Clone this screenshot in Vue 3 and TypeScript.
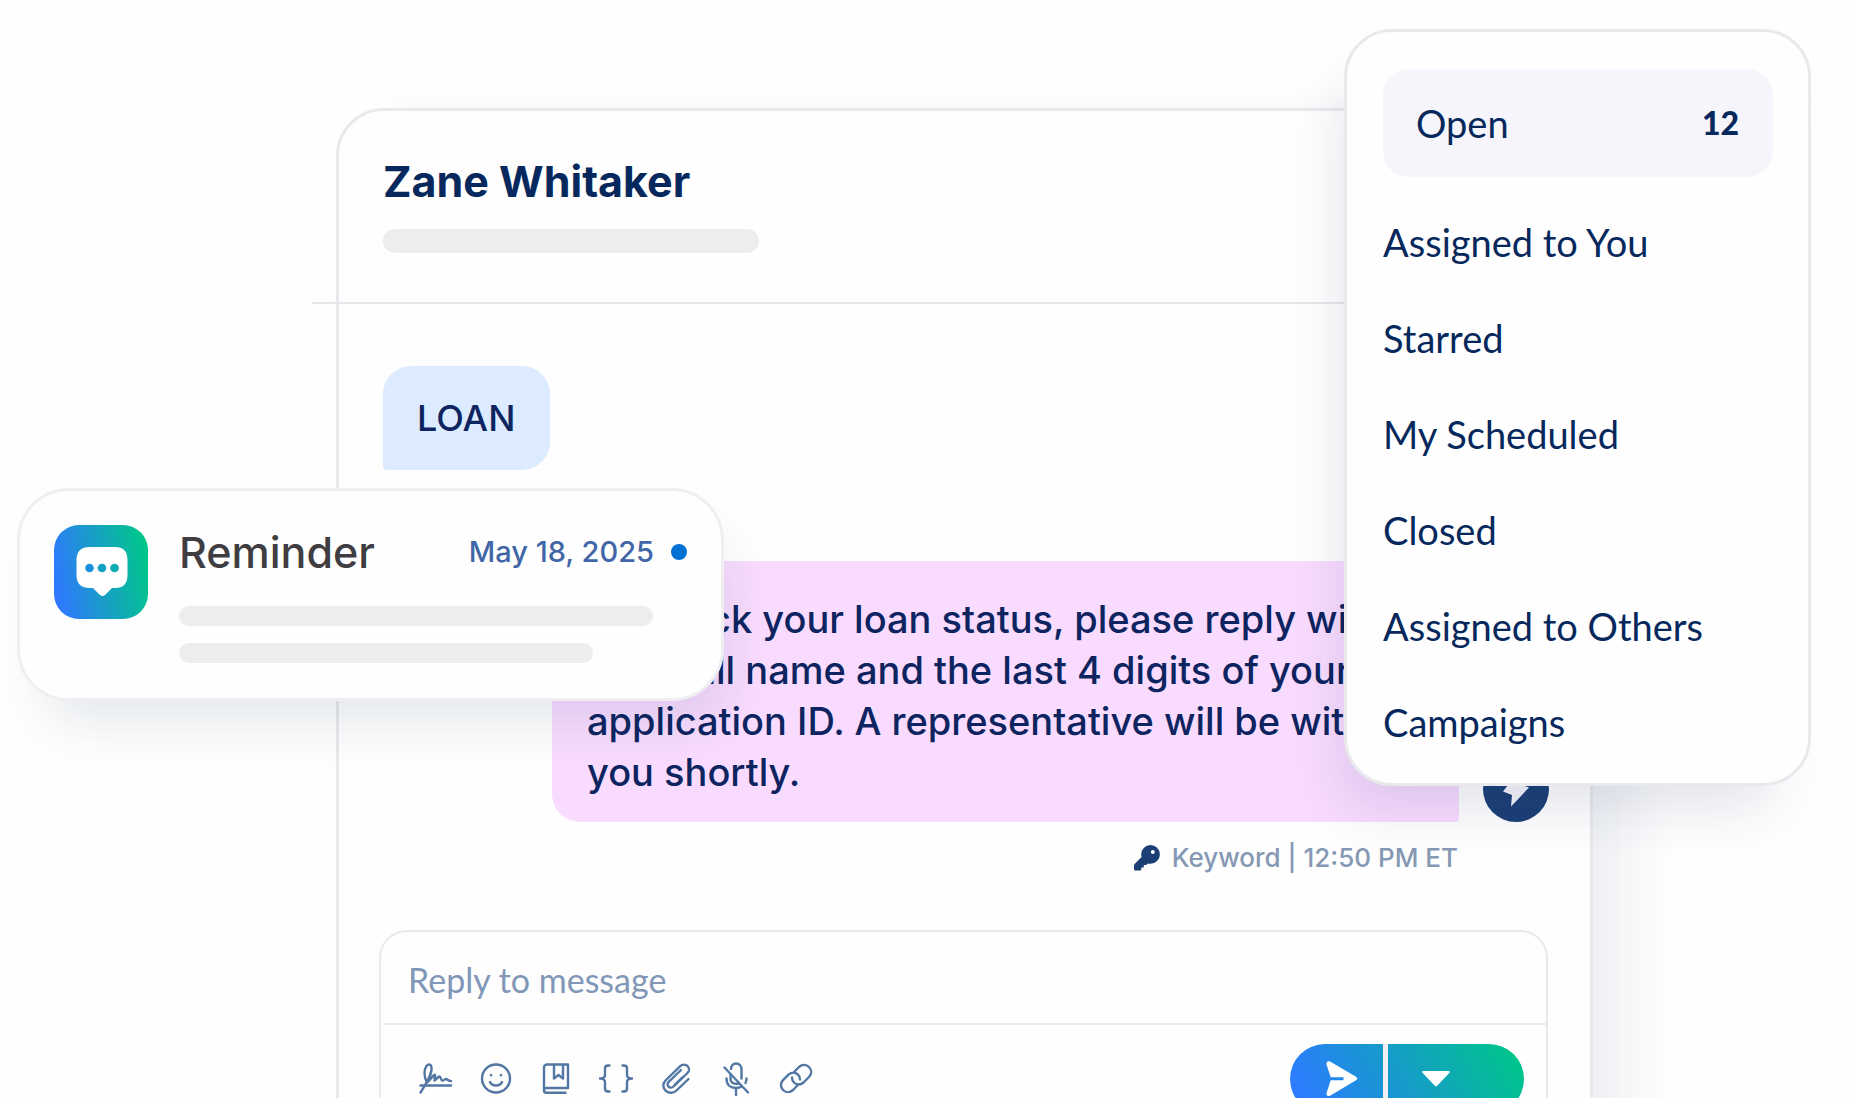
<script setup lang="ts">
import { ref } from 'vue'

interface Folder {
  label: string
  count?: number
}

const folders: Folder[] = [
  { label: 'Open', count: 12 },
  { label: 'Assigned to You' },
  { label: 'Starred' },
  { label: 'My Scheduled' },
  { label: 'Closed' },
  { label: 'Assigned to Others' },
  { label: 'Campaigns' },
]

const replyLines: string[] = [
  'To check your loan status, please reply with',
  'your full name and the last 4 digits of your',
  'application ID. A representative will be with',
  'you shortly.',
]

interface Tool {
  label: string
  paths: string[]
}

const tools: Tool[] = [
  {
    label: 'Signature',
    paths: [
      'M2.5 24.5H33',
      'M2.5 31.5C8 23 14 14 13.500 7C13.300 3 10.500 2.500 8.500 5C5.500 9 6 16 9 21.500C11 20 13.500 17 15.500 14.500C17 13 17.500 14 17 16L16.500 19.500C18.500 18 20 16 21.500 15.500C23 15.300 22.500 18.500 24 19.500C25.500 20.300 26.500 18 28 18C29.500 18 30 20 33 20',
    ],
  },
  {
    label: 'Emoji',
    paths: [
      'M18 3.500A14 14 0 1 0 18 31.500A14 14 0 1 0 18 3.500Z',
      'M12 21C14 25.700 22 25.700 24 21',
      'M13 14V14.200',
      'M23 14V14.200',
    ],
  },
  {
    label: 'Templates',
    paths: [
      'M30 27H8.500A3 3 0 0 0 6 29V6.500A3 3 0 0 1 9 3.500H30Z',
      'M6 29.500C6 31 7 31.800 8.500 31.800H27.500',
      'M16 4V17.500L20.500 14L25 17.500V4',
    ],
  },
  {
    label: 'Variables',
    paths: [
      'M11.500 4.500H10Q7 4.500 7 7.500V14Q7 17.500 2 17.500Q7 17.500 7 21V27.500Q7 30.500 10 30.500H11.500',
      'M24.500 4.500H26Q29 4.500 29 7.500V14Q29 17.500 34 17.500Q29 17.500 29 21V27.500Q29 30.500 26 30.500H24.500',
    ],
  },
  {
    label: 'Attach file',
    paths: [
      'M30.500 18L18.500 29.500C15.500 32.500 11 32.500 8 30C4.500 27 4.500 22.500 7.500 19.500L22 5.300C24.200 3.200 27.500 3.200 29.500 5C31.500 7 31.500 10 29.500 12L15.500 25.500C14 27 11.800 27 10.500 25.700C9.200 24.400 9.200 22.300 10.700 20.900L23 9',
      'M17 23.500L24.500 16.300',
    ],
  },
  {
    label: 'Microphone off',
    paths: [
      'M6.500 6.500L30 31.500',
      'M13 8C13 4.500 15.500 2.500 18 2.500C21.500 2.500 23.500 5 23.500 8.500V17.500',
      'M12.500 13.500V17.500C12.500 21.500 16 23.800 20.500 22.500',
      'M8.500 17.500C8.500 24 12.500 27 18 27C20 27 22 26.500 23.500 25.500',
      'M28.500 17.500Q28.500 20 27.500 22',
      'M18 27V34',
    ],
  },
  {
    label: 'Insert link',
    paths: [
      'M16.500 10.500L21 6C24 3.200 28.500 3.200 31 6C33.800 8.800 33.800 13 31 16L25.500 21.500C22.500 24.300 18.500 24.200 16 21.500C14.500 20 14 18.500 14 16.500',
      'M19.500 24.500L15 29C12 31.800 7.800 31.800 5 29C2.300 26.200 2.300 22 5 19.200L10.500 13.700C13.500 11 17.500 11 20 13.700C21.500 15.200 22 17 22 18.500',
    ],
  },
]

const draft = ref<string>('')
</script>

<template>
  <main class="scene">
    <section class="panel">
      <header class="panel-head">
        <h1 class="contact">Zane Whitaker</h1>
        <div class="bar bar-head"></div>
      </header>

      <div class="thread">
        <p class="bubble incoming">LOAN</p>
        <div class="outgoing-row">
          <p class="bubble outgoing">
            <span v-for="line in replyLines" :key="line" class="line">{{ line }}</span>
          </p>
          <svg class="avatar" viewBox="0 0 66 66" aria-hidden="true">
            <circle cx="33" cy="33" r="33" fill="#1b3f75" />
            <path d="M37 13L20 35.500L29 39L28 50.500L46 31.500L36 28Z" fill="#f6f5fb" />
          </svg>
        </div>
        <p class="meta">
          <svg class="key" viewBox="0 0 26 26" aria-hidden="true">
            <path
              fill-rule="evenodd"
              d="M16.500 0A9.300 9.300 0 0 1 16.500 18.800Q15 18.800 13.800 18.400L12.200 20H9.800V22.500H7.300V24.500Q7.300 25.500 6 25.500H1.500Q0 25.500 0 24V20.500Q0 19.700 .6 19.100L7.600 12Q7.200 10.800 7.200 9.300A9.300 9.300 0 0 1 16.500 0ZM18.800 5A2 2 0 1 0 18.800 9A2 2 0 1 0 18.800 5Z"
            />
          </svg>
          Keyword | 12:50 PM ET
        </p>
      </div>

      <form class="composer" @submit.prevent>
        <input v-model="draft" class="reply" type="text" placeholder="Reply to message" aria-label="Reply to message" />
        <div class="toolbar">
          <div class="tools">
            <button v-for="tool in tools" :key="tool.label" class="tool" type="button" :aria-label="tool.label">
              <svg viewBox="0 0 36 36" aria-hidden="true">
                <path v-for="d in tool.paths" :key="d" :d="d" />
              </svg>
            </button>
          </div>
          <div class="send-group">
            <button class="send" type="submit" aria-label="Send">
              <svg class="plane" viewBox="0 0 32 36" aria-hidden="true">
                <path
                  d="M4.500 .8L30 15.700Q32.500 17.500 30 19.300L4.500 34.600C2 36 -.3 34.300 .7 31.500L4.700 19.200H17.500V16.200H4.700L.7 4C-.3 1 2 -.6 4.500 .8Z"
                />
              </svg>
            </button>
            <button class="send-more" type="button" aria-label="Send options">
              <svg class="caret" viewBox="0 0 28 16" aria-hidden="true">
                <path d="M1 0H27Q28.500 .5 27.300 2L15.200 14.700Q14 16 12.800 14.700L.7 2Q-.5 .5 1 0Z" />
              </svg>
            </button>
          </div>
        </div>
      </form>
    </section>

    <article class="reminder">
      <svg class="app-icon" viewBox="0 0 94 94" aria-hidden="true">
        <defs>
          <linearGradient id="appFill" x1="0" y1="0.6" x2="1" y2="0.4">
            <stop offset="0" stop-color="#2f78ff" />
            <stop offset="1" stop-color="#00c68a" />
          </linearGradient>
        </defs>
        <rect width="94" height="94" rx="25" fill="url(#appFill)" />
        <path
          d="M36 22H61Q73.500 22 73.500 35V50Q73.500 63 61 63H58L51 70Q48.500 72 46 70L39 63H36Q22.500 63 22.500 50V35Q22.500 22 36 22Z"
          fill="#fff"
        />
        <circle cx="35.500" cy="43" r="4.300" fill="#1c8fdc" />
        <circle cx="48" cy="43" r="4.300" fill="#12a0c4" />
        <circle cx="60.500" cy="43" r="4.300" fill="#0aacb0" />
      </svg>
      <div class="reminder-body">
        <div class="reminder-top">
          <h2 class="reminder-title">Reminder</h2>
          <time class="date" datetime="2025-05-18">May 18, 2025</time>
          <span class="dot"></span>
        </div>
        <div class="bar bar-long"></div>
        <div class="bar bar-short"></div>
      </div>
    </article>

    <nav class="menu" aria-label="Folders">
      <a
        v-for="folder in folders"
        :key="folder.label"
        href="#"
        class="menu-item"
        :class="{ active: folder.count !== undefined }"
      >
        <span>{{ folder.label }}</span>
        <strong v-if="folder.count !== undefined" class="count">{{ folder.count }}</strong>
      </a>
    </nav>
  </main>
</template>

<style>
body {
  margin: 0;
  background: #fefefe;
}
</style>

<style scoped>
.scene {
  position: relative;
  height: 100vh;
  overflow: hidden;
  box-sizing: border-box;
  padding: 108px 258px 0 336px;
  font-family: Inter, 'Liberation Sans', sans-serif;
  color: #06285c;
}

h1,
h2,
p {
  margin: 0;
}

button {
  margin: 0;
  padding: 0;
  border: 0;
  background: none;
}

.bar {
  border-radius: 12px;
  background: #eeecef;
}

.panel {
  border: 3px solid #e9e8ec;
  border-radius: 48px;
  padding-bottom: 40px;
  background: #fefefe;
  box-shadow: 36px 20px 54px rgba(30, 60, 100, 0.07);
}

.panel-head {
  margin-left: -27px;
  padding: 46px 45px 49px 71px;
  border-bottom: 2px solid #e6e5e9;
}

.contact {
  font-size: 43px;
  line-height: 48px;
  font-weight: 700;
}

.bar-head {
  width: 376px;
  height: 24px;
  margin-top: 24px;
}

.thread {
  display: flex;
  flex-direction: column;
  padding: 62px 41px 0 44px;
}

.bubble {
  line-height: 51px;
  font-weight: 500;
  color: #0d2460;
}

.incoming {
  align-self: flex-start;
  padding: 27px 35px 26px 34px;
  border-radius: 28px 28px 28px 4px;
  background: #dcebff;
  font-size: 36px;
}

.outgoing-row {
  display: flex;
  align-items: flex-end;
  gap: 24px;
  margin: 91px 0 0 169px;
}

.outgoing {
  flex: 1;
  min-width: 0;
  padding: 33px 0 24px 35px;
  border-radius: 28px 28px 4px 28px;
  background: #f8dbfe;
  font-size: 38px;
}

.line {
  display: block;
  white-space: nowrap;
}

.avatar {
  width: 66px;
  height: 66px;
}

.meta {
  display: flex;
  align-items: center;
  justify-content: flex-end;
  gap: 12px;
  margin-top: 20px;
  padding-right: 91px;
  font-size: 26px;
  line-height: 32px;
  font-weight: 500;
  color: #8598b4;
}

.key {
  width: 26px;
  height: 26px;
  fill: #1b3f75;
}

.composer {
  margin: 56px 42px 0 40px;
  border: 2px solid #e9e8ec;
  border-radius: 28px;
}

.reply {
  display: block;
  width: 100%;
  height: 91px;
  box-sizing: border-box;
  padding: 3px 27px 0;
  border: 0;
  outline: 0;
  background: none;
  font-family: Lato, 'Open Sans', sans-serif;
  font-size: 34px;
  color: #06285c;
}

.reply::placeholder {
  color: #8197b7;
  opacity: 1;
}

.toolbar {
  display: flex;
  align-items: center;
  justify-content: space-between;
  margin-left: 3px;
  padding: 19px 22px 19px 34px;
  border-top: 2px solid #e9e8ec;
}

.tools {
  display: flex;
  gap: 24px;
}

.tool,
.tool svg {
  display: block;
  width: 36px;
  height: 36px;
}

.tool svg {
  fill: none;
  stroke: #5277a3;
  stroke-width: 2.4;
  stroke-linecap: round;
  stroke-linejoin: round;
}

.send-group {
  display: flex;
  height: 70px;
  border-radius: 35px;
  overflow: hidden;
  background: linear-gradient(60deg, #2c7cff 8%, #1996d2 42%, #00c48c 94%);
}

.send {
  display: flex;
  align-items: center;
  justify-content: center;
  width: 98px;
  padding-left: 10px;
  border-right: 5px solid #f0f0f4;
}

.send-more {
  display: flex;
  align-items: center;
  justify-content: center;
  width: 136px;
  padding-right: 41px;
}

.plane {
  width: 32px;
  height: 36px;
  fill: #fff;
}

.caret {
  width: 28px;
  height: 16px;
  fill: #fff;
}

.reminder {
  position: absolute;
  top: 488px;
  left: 17px;
  display: flex;
  gap: 31px;
  box-sizing: border-box;
  width: 707px;
  height: 213px;
  padding: 34px;
  border: 3px solid #efeef1;
  border-radius: 52px;
  background: #fefefe;
  box-shadow: 14px 36px 50px -14px rgba(30, 60, 100, 0.11);
}

.app-icon {
  flex: none;
  width: 94px;
  height: 94px;
}

.reminder-body {
  flex: 1;
}

.reminder-top {
  display: flex;
  align-items: center;
  height: 54px;
}

.reminder-title {
  flex: 1;
  font-size: 43px;
  line-height: 54px;
  font-weight: 500;
  color: #3f3d42;
}

.date {
  font-size: 29px;
  line-height: 48px;
  font-weight: 500;
  color: #4166a8;
}

.dot {
  width: 16px;
  height: 16px;
  margin-left: 17px;
  border-radius: 50%;
  background: #0070d2;
}

.bar-long {
  width: 474px;
  height: 20px;
  margin-top: 27px;
}

.bar-short {
  width: 414px;
  height: 20px;
  margin-top: 17px;
}

.menu {
  position: absolute;
  top: 29px;
  right: 40px;
  box-sizing: border-box;
  width: 467px;
  padding: 37px 35px 12px 36px;
  border: 3px solid #e9e8ec;
  border-radius: 48px;
  background: #fefefe;
  box-shadow: -20px 40px 56px -20px rgba(30, 50, 100, 0.13);
}

.menu-item {
  display: flex;
  align-items: center;
  justify-content: space-between;
  height: 96px;
  box-sizing: border-box;
  padding-bottom: 2px;
  font-family: Lato, 'Open Sans', sans-serif;
  font-size: 38px;
  line-height: 44px;
  color: #06285c;
  text-decoration: none;
}

.menu-item.active {
  height: 108px;
  margin-bottom: 18px;
  padding: 0 34px 0 33px;
  border-radius: 26px;
  background: #f6f5fb;
}

.count {
  font-size: 32px;
  font-weight: 900;
}
</style>
